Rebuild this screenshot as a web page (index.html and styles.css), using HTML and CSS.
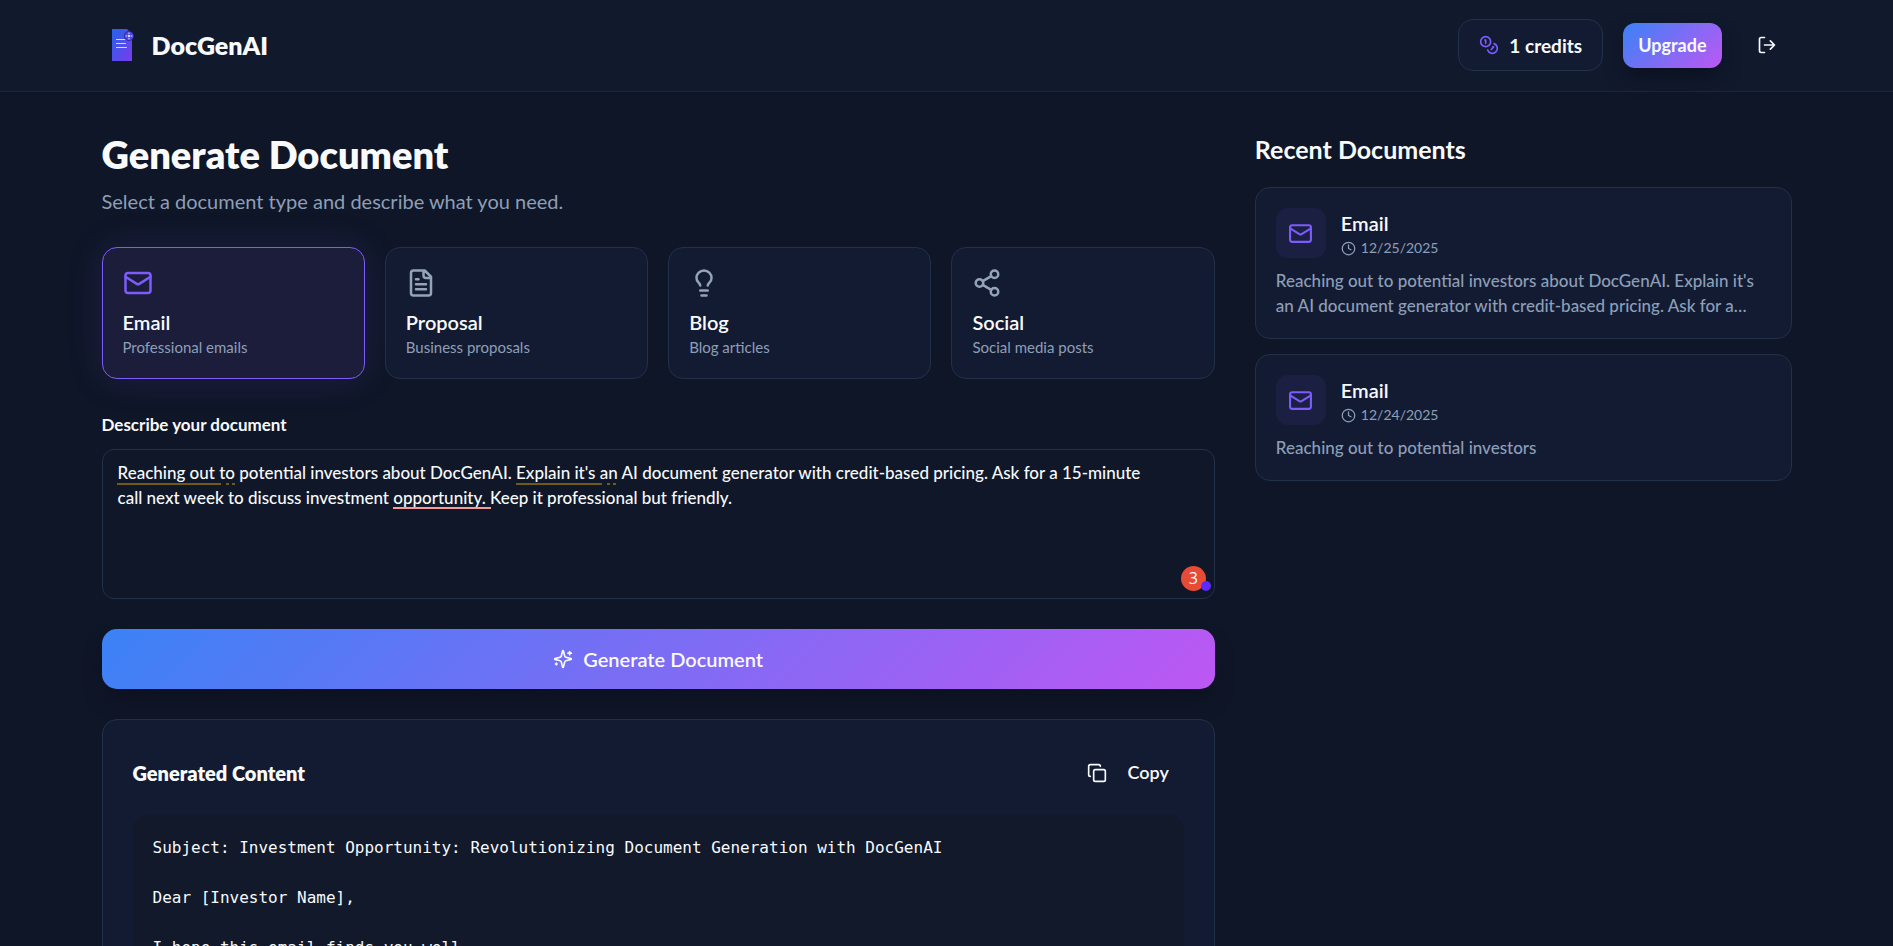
FILE: index.html
```html
<!DOCTYPE html>
<html lang="en">
<head>
<meta charset="utf-8">
<title>DocGenAI</title>
<link rel="stylesheet" href="styles.css">
</head>
<body>
<svg class="sprite" aria-hidden="true">
  <symbol id="mail" viewBox="0 0 24 24"><rect width="20" height="16" x="2" y="4" rx="2"/><path d="m22 7-8.97 5.7a1.94 1.94 0 0 1-2.06 0L2 7"/></symbol>
  <symbol id="clock" viewBox="0 0 24 24"><circle cx="12" cy="12" r="10"/><path d="M12 6v6l4 2"/></symbol>
</svg>
<header class="topbar">
  <div class="container topbar-inner">
    <a class="brand" href="#">
      <svg class="brand-mark" viewBox="0 0 40 40" aria-hidden="true">
        <defs><linearGradient id="mark" x1="0" y1="0" x2="1" y2="1"><stop offset="0" stop-color="#2563eb"/><stop offset="1" stop-color="#7c3aed"/></linearGradient></defs>
        <path fill="url(#mark)" d="M10 4h15l5 5v27H10z"/>
        <path stroke="#d4d4ff" stroke-linecap="round" d="M14.500 14.500h9M14.500 18.500h9M14.500 22.500h10"/>
        <circle cx="27" cy="11" r="5" fill="#2a2590"/><circle cx="27" cy="11" r="4.200" fill="#4f46e5"/>
        <path stroke="#dcdcff" d="M27 7.500v1.500M27 13v1.500M23.500 11h1.500M29 11h1.500"/><circle cx="27" cy="11" r="1.300" fill="#dcdcff"/>
      </svg>
      <span>DocGenAI</span>
    </a>
    <div class="account">
      <div class="credits">
        <svg class="icon icon-sm" viewBox="0 0 24 24" aria-hidden="true"><circle cx="8" cy="8" r="6"/><path d="M18.090 10.370A6 6 0 1 1 10.340 18M7 6h1v4M16.710 13.880l.7.710-2.820 2.820"/></svg>
        <span>1 credits</span>
      </div>
      <button class="upgrade" type="button">Upgrade</button>
      <button class="logout" type="button" aria-label="Log out">
        <svg class="icon icon-sm" viewBox="0 0 24 24" aria-hidden="true"><path d="M9 21H5a2 2 0 0 1-2-2V5a2 2 0 0 1 2-2h4M16 17l5-5-5-5M21 12H9"/></svg>
      </button>
    </div>
  </div>
</header>
<main class="container layout">
  <section class="generator">
    <h1>Generate Document</h1>
    <p class="subtitle">Select a document type and describe what you need.</p>
    <div class="types">
      <button class="type selected" type="button" aria-pressed="true">
        <svg class="icon icon-lg" aria-hidden="true"><use href="#mail"/></svg>
        <span class="name">Email</span><span class="hint">Professional emails</span>
      </button>
      <button class="type" type="button" aria-pressed="false">
        <svg class="icon icon-lg" viewBox="0 0 24 24" aria-hidden="true"><path d="M15 2H6a2 2 0 0 0-2 2v16a2 2 0 0 0 2 2h12a2 2 0 0 0 2-2V7ZM14 2v4a2 2 0 0 0 2 2h4M10 9H8M16 13H8M16 17H8"/></svg>
        <span class="name">Proposal</span><span class="hint">Business proposals</span>
      </button>
      <button class="type" type="button" aria-pressed="false">
        <svg class="icon icon-lg" viewBox="0 0 24 24" aria-hidden="true"><path d="M15 14c.2-1 .7-1.700 1.500-2.500 1-.9 1.500-2.200 1.500-3.500A6 6 0 0 0 6 8c0 1 .2 2.200 1.500 3.500.7.7 1.300 1.500 1.500 2.500M9 18h6M10 22h4"/></svg>
        <span class="name">Blog</span><span class="hint">Blog articles</span>
      </button>
      <button class="type" type="button" aria-pressed="false">
        <svg class="icon icon-lg" viewBox="0 0 24 24" aria-hidden="true"><circle cx="18" cy="5" r="3"/><circle cx="6" cy="12" r="3"/><circle cx="18" cy="19" r="3"/><path d="m8.590 13.510 6.830 3.980M15.410 6.510l-6.820 3.980"/></svg>
        <span class="name">Social</span><span class="hint">Social media posts</span>
      </button>
    </div>
    <label class="prompt-label" for="prompt">Describe your document</label>
    <div class="prompt-box">
      <textarea id="prompt" spellcheck="false">Reaching out to potential investors about DocGenAI. Explain it's an AI document generator with credit-based pricing. Ask for a 15-minute call next week to discuss investment opportunity. Keep it professional but friendly.</textarea>
      <div class="marks" aria-hidden="true"><i class="mark first"></i><i class="mark dots first-dots"></i><i class="mark second"></i><i class="mark dots second-dots"></i><i class="mark third"></i></div>
      <span class="issues">3</span>
    </div>
    <button class="generate" type="button">
      <svg class="icon icon-sm" viewBox="0 0 24 24" aria-hidden="true"><path d="M9.937 15.500A2 2 0 0 0 8.500 14.063l-6.135-1.582a.5.500 0 0 1 0-.962L8.500 9.936A2 2 0 0 0 9.937 8.500l1.582-6.135a.5.500 0 0 1 .963 0L14.063 8.500A2 2 0 0 0 15.500 9.937l6.135 1.581a.5.500 0 0 1 0 .964L15.500 14.063a2 2 0 0 0-1.437 1.437l-1.582 6.135a.5.500 0 0 1-.963 0zM20 3v4M22 5h-4M4 17v2M5 18H3"/></svg>
      <span>Generate Document</span>
    </button>
    <section class="result">
      <div class="result-head">
        <h2>Generated Content</h2>
        <button class="copy" type="button">
          <svg class="icon icon-sm" viewBox="0 0 24 24" aria-hidden="true"><rect width="14" height="14" x="8" y="8" rx="2"/><path d="M4 16c-1.100 0-2-.9-2-2V4c0-1.100.9-2 2-2h10c1.100 0 2 .9 2 2"/></svg>
          <span>Copy</span>
        </button>
      </div>
      <pre class="output">Subject: Investment Opportunity: Revolutionizing Document Generation with DocGenAI

Dear [Investor Name],

I hope this email finds you well.</pre>
    </section>
  </section>
  <aside class="recent">
    <h2>Recent Documents</h2>
    <article class="doc">
      <div class="doc-head">
        <span class="doc-icon"><svg class="icon icon-md" aria-hidden="true"><use href="#mail"/></svg></span>
        <div class="doc-meta"><h3>Email</h3><p class="date"><svg class="icon icon-xs" aria-hidden="true"><use href="#clock"/></svg>12/25/2025</p></div>
      </div>
      <p class="excerpt">Reaching out to potential investors about DocGenAI. Explain it's an AI document generator with credit-based pricing. Ask for a…</p>
    </article>
    <article class="doc">
      <div class="doc-head">
        <span class="doc-icon"><svg class="icon icon-md" aria-hidden="true"><use href="#mail"/></svg></span>
        <div class="doc-meta"><h3>Email</h3><p class="date"><svg class="icon icon-xs" aria-hidden="true"><use href="#clock"/></svg>12/24/2025</p></div>
      </div>
      <p class="excerpt">Reaching out to potential investors</p>
    </article>
  </aside>
</main>
</body>
</html>
```
FILE: styles.css
```css
:root {
  --bg: #0f1729;
  --card: #131b33;
  --line: #223148;
  --text: #f8fafc;
  --muted: #8d9fb7;
  --accent: #7c5cfc;
  --gradient: linear-gradient(135deg, #3b82f6, #bd57f3);
}
* { box-sizing: border-box; }
html { overflow: hidden; }
body { margin: 0; height: 100vh; overflow: hidden; background: #0f1627; color: var(--text); font: 17px/25px Lato, sans-serif; }
h1, h2, h3, p, pre { margin: 0; }
button, textarea { font: inherit; color: inherit; }
button { border: 0; background: none; padding: 0; cursor: pointer; }
.sprite { display: none; }
.container { max-width: 1750px; margin: 0 auto; padding: 0 30px; }
.icon { flex: none; fill: none; stroke: currentColor; stroke-width: 2; stroke-linecap: round; stroke-linejoin: round; }
.icon-xs { width: 15px; height: 15px; }
.icon-sm { width: 20px; height: 20px; }
.icon-md { width: 25px; height: 25px; }
.icon-lg { width: 30px; height: 30px; }

.topbar { background: #11192d; border-bottom: 1px solid #1b283c; }
.topbar-inner { display: flex; align-items: center; justify-content: space-between; padding-top: 19px; padding-bottom: 20px; }
.brand { display: flex; align-items: center; gap: 10px; color: inherit; text-decoration: none; font-size: 25px; font-weight: 800; }
.brand-mark { width: 40px; height: 40px; }
.account { display: flex; align-items: center; gap: 20px; }
.credits { display: flex; align-items: center; gap: 10px; height: 52px; padding: 0 20px; border: 1px solid var(--line); border-radius: 15px; background: var(--card); font-size: 19px; font-weight: 700; }
.credits .icon { color: var(--accent); }
.upgrade { height: 45px; padding: 0 15px; border-radius: 12px; background: var(--gradient); box-shadow: 0 10px 20px -4px #0a0f1e; font-size: 18px; font-weight: 700; }
.logout { display: flex; align-items: center; justify-content: center; width: 50px; height: 45px; }

.layout { display: grid; grid-template-columns: repeat(3, minmax(0, 1fr)); gap: 40px; padding-top: 40px; align-items: start; }
.generator { grid-column: span 2; }
h1 { font-size: 38px; line-height: 45px; font-weight: 800; }
.subtitle { margin-top: 9px; color: var(--muted); font-size: 20px; line-height: 30px; }
.types { display: grid; grid-template-columns: repeat(4, minmax(0, 1fr)); gap: 20px; margin-top: 31px; }
.type { display: flex; flex-direction: column; align-items: flex-start; padding: 20px; height: 132px; border: 1px solid var(--line); border-radius: 15px; background: var(--card); text-align: left; }
.type .icon { color: #94a3b8; }
.type.selected { border-color: var(--accent); background: #1b1d3b; box-shadow: 0 0 38px #7c5cfc22; }
.type.selected .icon { color: var(--accent); }
.name { margin-top: 9px; font-size: 20px; line-height: 30px; font-weight: 600; }
.hint { color: var(--muted); font-size: 15px; line-height: 20px; }
.prompt-label { display: block; margin: 33px 0 12px; font-weight: 700; }
.prompt-box { position: relative; height: 150px; }
textarea { display: block; width: 100%; height: 100%; padding: 10px 60px 10px 15px; border: 1px solid var(--line); border-radius: 12px; background: var(--bg); font-weight: 500; resize: none; outline: 0; }
.mark { position: absolute; height: 2px; background: #705a17; }
.mark.dots { width: 9px; background: linear-gradient(90deg, #705a17 3px, transparent 3px 6px, #705a17 6px); }
.first { left: 15px; top: 34px; width: 104px; }
.first-dots { left: 124px; top: 34px; }
.second { left: 414px; top: 34px; width: 86px; }
.second-dots { left: 505px; top: 34px; }
.mark.third { left: 291px; top: 58px; width: 98px; background: #f79a9a; }
.issues { position: absolute; right: 9px; bottom: 8px; width: 25px; height: 25px; border-radius: 50%; background: #e84b35; text-align: center; font: 16px/25px "Open Sans", sans-serif; }
.issues::after { content: ""; position: absolute; right: -5px; bottom: 0; width: 10px; height: 10px; border-radius: 50%; background: #5b2bff; }
.generate { display: flex; align-items: center; justify-content: center; gap: 10px; width: 100%; height: 60px; margin-top: 30px; border-radius: 15px; background: var(--gradient); box-shadow: 0 12px 20px -4px #0c1120; font-size: 20px; font-weight: 600; }
.result { margin-top: 30px; padding: 30px; border: 1px solid var(--line); border-radius: 15px; background: var(--card); }
.result-head { display: flex; align-items: center; justify-content: space-between; height: 45px; }
.result h2 { font-size: 20px; line-height: 30px; font-weight: 800; }
.copy { display: flex; align-items: center; gap: 20px; height: 45px; padding: 0 15px; font-size: 18px; font-weight: 600; }
.output { margin-top: 20px; padding: 20px; border-radius: 15px; background: #11192b; font: 16px/25px "DejaVu Sans Mono", monospace; white-space: pre-wrap; }

.recent h2 { font-size: 25px; line-height: 35px; font-weight: 700; }
.doc { margin-top: 15px; padding: 20px; border: 1px solid var(--line); border-radius: 15px; background: var(--card); }
.recent h2 + .doc { margin-top: 20px; }
.doc-head { display: flex; align-items: center; gap: 15px; }
.doc-icon { display: flex; align-items: center; justify-content: center; width: 50px; height: 50px; border-radius: 12px; background: #1b1f42; color: var(--accent); }
h3 { font-size: 20px; line-height: 30px; font-weight: 600; }
.date { display: flex; align-items: center; gap: 5px; color: var(--muted); font-size: 14px; line-height: 20px; }
.excerpt { margin-top: 10px; color: var(--muted); font-weight: 500; }
```
